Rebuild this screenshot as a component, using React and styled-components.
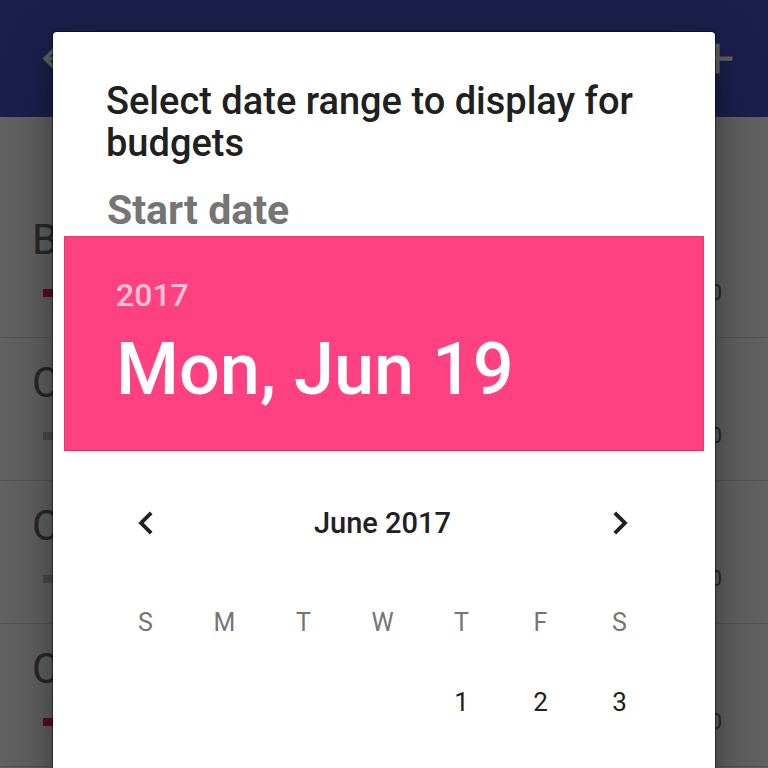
import React from "react";
import styled, { createGlobalStyle } from "styled-components";

const Global = createGlobalStyle`
  html, body { margin: 0; padding: 0; }
  body { width: 768px; height: 768px; overflow: hidden; font-family: Roboto, "Noto Sans", sans-serif; }
`;

const Screen = styled.div`
  position: relative;
  width: 768px;
  height: 768px;
  overflow: hidden;
  background: #ffffff;
`;

const AppBar = styled.header`
  height: 117px;
  background: #4555c4;
  display: flex;
  align-items: center;
  justify-content: space-between;
  padding: 0 25px 0 35px;
  box-sizing: border-box;
`;

const BarIcon = styled.svg`
  width: ${(p) => p.$size}px;
  height: ${(p) => p.$size}px;
  fill: #ffffff;
  display: block;
`;

const List = styled.div`
  padding-top: 78px;
`;

const Row = styled.div`
  height: 143px;
  box-sizing: border-box;
  border-bottom: 1px solid #dddddd;
  padding: 20px 46px 0 32px;
`;

const RowTitle = styled.div`
  font-size: 42px;
  line-height: 50px;
  color: #6a6a6a;
`;

const RowMeta = styled.div`
  display: flex;
  align-items: center;
  gap: 20px;
  margin-top: 20px;
`;

const Progress = styled.div`
  flex: 1;
  height: 8px;
  margin-left: 11px;
  background: ${(p) => (p.$accent ? "#f0206a" : "#c4c4c4")};
`;

const Amount = styled.div`
  font-size: 22px;
  line-height: 16px;
  color: #6a6a6a;
`;

const Scrim = styled.div`
  position: absolute;
  inset: 0;
  background: rgba(0, 0, 0, 0.62);
`;

const Dialog = styled.div`
  position: absolute;
  left: 53px;
  top: 32px;
  width: 662px;
  height: 780px;
  background: #ffffff;
  border-radius: 4px;
  box-shadow: 0 0 1px 1px rgba(0, 0, 0, 0.45), 0 14px 44px rgba(0, 0, 0, 0.45);
  padding-top: 48px;
  box-sizing: border-box;
`;

const Title = styled.h2`
  margin: 0 40px 0 53px;
  font-size: 38px;
  line-height: 42px;
  font-weight: 500;
  color: #202020;
`;

const Subtitle = styled.div`
  margin: 22px 0 2px 54px;
  font-size: 41px;
  line-height: 48px;
  font-weight: 700;
  color: #757575;
`;

const DateHeader = styled.div`
  margin: 0 11px;
  height: 215px;
  box-sizing: border-box;
  background: #ff4081;
  border: 1px solid #f9306f;
  border-bottom-color: #f5226a;
  padding: 39px 0 0 51px;
`;

const Year = styled.div`
  font-size: 32px;
  line-height: 38px;
  font-weight: 500;
  color: rgba(255, 255, 255, 0.7);
`;

const BigDate = styled.div`
  margin-top: 13px;
  font-size: 72px;
  line-height: 86px;
  font-weight: 500;
  color: #ffffff;
`;

const Calendar = styled.div`
  margin: 44px 56px 0 53px;
`;

const MonthNav = styled.div`
  height: 56px;
  display: grid;
  grid-template-columns: 79px 1fr 79px;
  align-items: center;
`;

const NavButton = styled.button`
  border: 0;
  background: none;
  padding: 0;
  display: flex;
  justify-content: center;
  align-items: center;
  cursor: pointer;
`;

const Chevron = styled.svg`
  width: 46px;
  height: 46px;
  fill: #212121;
  display: block;
`;

const MonthLabel = styled.div`
  text-align: center;
  font-size: 29px;
  font-weight: 500;
  color: #212121;
`;

const Week = styled.div`
  display: grid;
  grid-template-columns: repeat(7, 79px);
  height: 80px;
  align-items: center;
  margin-top: ${(p) => p.$top || 0}px;
`;

const Cell = styled.div`
  text-align: center;
  font-size: ${(p) => (p.$head ? 25 : 26)}px;
  color: ${(p) => (p.$head ? "#757575" : "#212121")};
`;

const rows = [
  { name: "Bills", accent: true },
  { name: "Car", accent: false },
  { name: "Clothing", accent: false },
  { name: "Coffee", accent: true },
];

const heads = ["S", "M", "T", "W", "T", "F", "S"];
const firstWeek = ["", "", "", "", "1", "2", "3"];

export default function App() {
  return (
    <Screen>
      <Global />
      <AppBar>
        <BarIcon $size={45} viewBox="0 0 24 24">
          <path d="M20 11H7.83l5.59-5.59L12 4l-8 8 8 8 1.41-1.41L7.83 13H20v-2z" />
        </BarIcon>
        <BarIcon $size={51} viewBox="0 0 24 24">
          <path d="M19 13h-6v6h-2v-6H5v-2h6V5h2v6h6v2z" />
        </BarIcon>
      </AppBar>
      <List>
        {rows.map((r) => (
          <Row key={r.name}>
            <RowTitle>{r.name}</RowTitle>
            <RowMeta>
              <Progress $accent={r.accent} />
              <Amount>$0.00</Amount>
            </RowMeta>
          </Row>
        ))}
      </List>
      <Scrim />
      <Dialog>
        <Title>Select date range to display for budgets</Title>
        <Subtitle>Start date</Subtitle>
        <DateHeader>
          <Year>2017</Year>
          <BigDate>Mon, Jun 19</BigDate>
        </DateHeader>
        <Calendar>
          <MonthNav>
            <NavButton aria-label="Previous month">
              <Chevron viewBox="0 0 24 24">
                <path d="M15.41 7.41L14 6l-6 6 6 6 1.41-1.41L10.83 12z" />
              </Chevron>
            </NavButton>
            <MonthLabel>June 2017</MonthLabel>
            <NavButton aria-label="Next month">
              <Chevron viewBox="0 0 24 24">
                <path d="M10 6L8.59 7.41 13.17 12l-4.58 4.59L10 18l6-6z" />
              </Chevron>
            </NavButton>
          </MonthNav>
          <Week $top={31}>
            {heads.map((h, i) => (
              <Cell $head key={i}>{h}</Cell>
            ))}
          </Week>
          <Week>
            {firstWeek.map((d, i) => (
              <Cell key={i}>{d}</Cell>
            ))}
          </Week>
        </Calendar>
      </Dialog>
    </Screen>
  );
}
